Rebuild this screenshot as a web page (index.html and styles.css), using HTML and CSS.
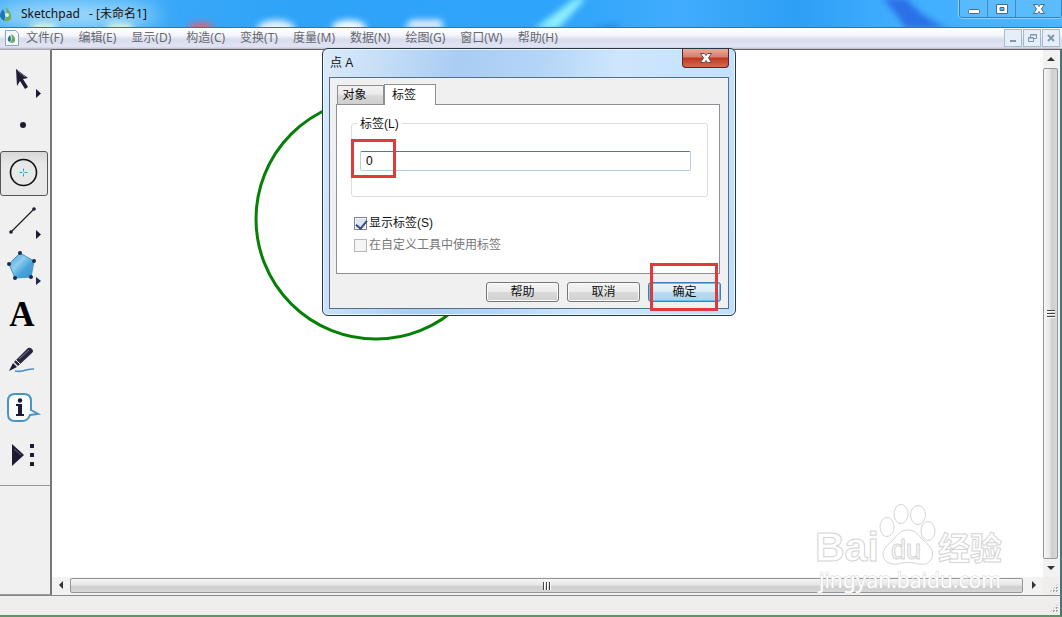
FILE: index.html
```html
<!DOCTYPE html>
<html lang="zh-CN">
<head>
    <meta charset="UTF-8">
    <meta name="viewport" content="width=device-width, initial-scale=1.0">
    <title>Sketchpad - [未命名1]</title>
    <link rel="stylesheet" href="styles.css">
</head>
<body>
    <header class="titlebar">
        <svg class="aero" viewBox="0 0 1062 27" preserveAspectRatio="none" aria-hidden="true">
            <defs>
                <filter id="soft" x="-50%" y="-50%" width="200%" height="200%"><feGaussianBlur stdDeviation="3"/></filter>
                <filter id="glow" x="-50%" y="-100%" width="200%" height="300%"><feGaussianBlur stdDeviation="10"/></filter>
            </defs>
            <ellipse cx="75" cy="15" rx="85" ry="13" fill="#a4dcfb" filter="url(#glow)"/>
            <g filter="url(#soft)">
                <ellipse cx="44" cy="28" rx="14" ry="5" fill="#e2f8d8"/>
                <ellipse cx="120" cy="28" rx="14" ry="5" fill="#e2f8d8"/>
                <ellipse cx="201" cy="28" rx="13" ry="6" fill="#c96a80"/>
                <ellipse cx="276" cy="29" rx="19" ry="9" fill="#e4f3fd"/>
                <ellipse cx="349" cy="28" rx="17" ry="8" fill="#f4fbff"/>
                <path d="M404 29l7-9h30l3 9z" fill="#eaf0ff"/>
                <path d="M534 29L576-2h10L558 29z" fill="#8ff0ff"/>
                <path d="M590 29q12-5 30-4l-4 5z" fill="#1b83e8"/>
                <path d="M882-2h24q18 22 44 31h-44q-9-15-24-31z" fill="#2a6fe6"/>
            </g>
        </svg>
        <svg class="app-icon" viewBox="0 0 14 16" aria-hidden="true">
            <path d="M5 1q7 5 6 12-3 3-7 2 5-6 1-14z" fill="#6fae4c"/>
            <path d="M3 3q4 6 1 12-5-3-4-7 1-3 3-5z" fill="#2278b5"/>
            <circle cx="7" cy="9" r="2" fill="#d8f0ff"/>
        </svg>
        <h1>Sketchpad&nbsp;&nbsp; - [未命名1]</h1>
        <div class="window-buttons">
            <button type="button" aria-label="最小化"><svg viewBox="0 0 14 12"><rect x="1.500" y="6.500" width="11" height="4" rx="1" fill="#fff" stroke="#47698a"/></svg></button>
            <button type="button" aria-label="最大化"><svg viewBox="0 0 14 12"><path d="M1.500 1.500h11v9h-11zM5 4.500v3h4v-3z" fill="#fff" fill-rule="evenodd" stroke="#47698a"/></svg></button>
            <button type="button" class="wide" aria-label="关闭"><svg viewBox="0 0 14 12"><path d="M1.500 1.500h4L7 3.500l1.500-2h4L9.500 6l3 4.500h-4L7 8.500l-1.500 2h-4l3-4.500z" fill="#fff" stroke="#47698a"/></svg></button>
        </div>
    </header>

    <nav class="menubar">
        <svg class="doc-icon" viewBox="0 0 14 16" aria-hidden="true">
            <path d="M.5.5h10l3 3v12H.5z" fill="#f5f9fc" stroke="#8aa5b7"/>
            <path d="M6 4q5 3 4 7-1 2-5 2 3-3 1-9z" fill="#69a957"/>
            <path d="M5 5q2 4 0 7-3-1-2-4 1-2 2-3z" fill="#2873a8"/>
        </svg>
        <a href="#">文件(F)</a>
        <a href="#">编辑(E)</a>
        <a href="#">显示(D)</a>
        <a href="#">构造(C)</a>
        <a href="#">变换(T)</a>
        <a href="#">度量(M)</a>
        <a href="#">数据(N)</a>
        <a href="#">绘图(G)</a>
        <a href="#">窗口(W)</a>
        <a href="#">帮助(H)</a>
        <div class="doc-buttons">
            <button type="button" aria-label="最小化文档"><svg viewBox="0 0 10 10"><path d="M2 8h6" stroke="#7d97ad" stroke-width="2"/></svg></button>
            <button type="button" aria-label="还原文档"><svg viewBox="0 0 10 10"><path d="M3.500 4V1.500h6v4H7M3.500 2h6M1.500 4.500h5v4h-5zM1.500 5h5" fill="none" stroke="#7d97ad"/></svg></button>
            <button type="button" aria-label="关闭文档"><svg viewBox="0 0 10 10"><path d="M2 2l6 6M8 2L2 8" stroke="#7d97ad" stroke-width="2"/></svg></button>
        </div>
    </nav>

    <main class="workspace">
        <aside class="toolbar">
            <div class="tools">
                <button type="button" aria-label="移动箭头工具">
                    <svg viewBox="0 0 46 44"><path d="M15 11l12 9-5 1 5 8-3 2-5-8-3 5z" fill="#1e1b35"/><path d="M17 13l7 6" stroke="#77758d"/><path d="M35 31l5 4.500-5 4.500z" fill="#1e1b35"/></svg>
                </button>
                <button type="button" aria-label="点工具">
                    <svg viewBox="0 0 46 44"><circle cx="22" cy="20" r="3" fill="#1e1b35"/></svg>
                </button>
                <button type="button" class="active" aria-label="圆工具">
                    <svg viewBox="0 0 46 44"><circle cx="22.500" cy="20.500" r="13" fill="none" stroke="#111" stroke-width="1.600"/><path d="M22.500 16.500v3M22.500 21.500v3M18.500 20.500h3M23.500 20.500h3" stroke="#3a9bd0"/></svg>
                </button>
                <button type="button" aria-label="直尺工具">
                    <svg viewBox="0 0 46 44"><path d="M10 33L33 10" stroke="#222" stroke-width="1.300"/><circle cx="10" cy="33" r="1.800" fill="#1e1b35"/><circle cx="33" cy="10" r="1.800" fill="#1e1b35"/><path d="M35 31l5 4.500-5 4.500z" fill="#1e1b35"/></svg>
                </button>
                <button type="button" aria-label="多边形工具">
                    <svg viewBox="0 0 46 44">
                        <defs><linearGradient id="poly" x2="1" y2="1"><stop stop-color="#4499d0"/><stop offset=".4" stop-color="#8ecdf0"/><stop offset=".65" stop-color="#4aa2da"/><stop offset="1" stop-color="#3c94ce"/></linearGradient></defs>
                        <path d="M19 7l14 8-3 16-16 1-6-14z" fill="url(#poly)" stroke="#4396ca"/>
                        <g fill="#1e2a45"><circle cx="19" cy="7" r="2"/><circle cx="33" cy="15" r="2"/><circle cx="30" cy="31" r="2"/><circle cx="14" cy="32" r="2"/><circle cx="8" cy="18" r="2"/><path d="M35 31l5 4-5 4z"/></g>
                    </svg>
                </button>
                <button type="button" class="text-tool" aria-label="文本工具">A</button>
                <button type="button" aria-label="标记工具">
                    <svg viewBox="0 0 46 44"><path d="M14 31q6 1 11-1 4-1 8-1" fill="none" stroke="#4295cb" stroke-width="1.600"/><path d="M8 31l4-8 4 4z" fill="#1e1b35"/><path d="M13 22L27 8q2-1 4 1t0 4L17 26z" fill="#282640"/><path d="M18 19L28 10" stroke="#85849a"/><path d="M15 20l4 4" stroke="#eee"/></svg>
                </button>
                <button type="button" aria-label="信息工具">
                    <svg viewBox="0 0 46 44"><path d="M14 7h9q7 0 7 7v9l7 4-8 1q-2 6-8 6h-7q-7 0-7-7V14q0-7 7-7z" fill="#fafcfd" stroke="#4a94c2" stroke-width="2"/><circle cx="19" cy="13.500" r="2.200" fill="#1e1b35"/><path d="M15 17h6v10h2v2h-8v-2h2v-8h-2z" fill="#1e1b35"/></svg>
                </button>
                <button type="button" aria-label="自定义工具">
                    <svg viewBox="0 0 46 44"><path d="M11 10l12 11-12 11z" fill="#1e1b35"/><path d="M13 15l7 6" stroke="#626077"/><path d="M29 10h4v4h-4zM29 19h4v4h-4zM29 28h4v4h-4z" fill="#1e1b35"/></svg>
                </button>
            </div>
        </aside>

        <div class="sketch">
            <svg class="drawing" aria-label="圆"><circle cx="324" cy="169" r="120"/></svg>
            <div class="scroll scroll-y">
                <svg viewBox="0 0 16 18"><path d="M4 11h8L8 7z"/></svg>
                <div class="thumb"></div>
                <svg viewBox="0 0 16 18"><path d="M4 7h8l-4 4z"/></svg>
            </div>
            <div class="scroll scroll-x">
                <svg viewBox="0 0 18 16"><path d="M11 4v8L7 8z"/></svg>
                <div class="thumb"></div>
                <svg viewBox="0 0 18 16"><path d="M7 4v8l4-4z"/></svg>
            </div>
            <div class="corner"><i class="grip"></i></div>
        </div>

        <form class="dialog" role="dialog" aria-labelledby="dialogTitle">
            <div class="dialog-title">
                <h2 id="dialogTitle">点 A</h2>
                <button type="button" class="dialog-close" aria-label="关闭"><svg viewBox="0 0 14 12"><path d="M1.500 1.500h4L7 3.500l1.500-2h4L9.500 6l3 4.500h-4L7 8.500l-1.500 2h-4l3-4.500z" fill="#fff" stroke="#6d4a4c"/></svg></button>
            </div>
            <div class="dialog-body">
                <div class="tabs">
                    <button type="button">对象</button>
                    <button type="button" class="selected">标签</button>
                </div>
                <div class="panel">
                    <div class="group">
                        <label for="labelText">标签(L)</label>
                        <input type="text" id="labelText" value="0">
                        <span class="mark mark-input"></span>
                    </div>
                    <div class="check">
                        <input type="checkbox" id="showLabel" checked>
                        <label for="showLabel">显示标签(S)</label>
                    </div>
                    <div class="check">
                        <input type="checkbox" id="useLabel" disabled>
                        <label for="useLabel">在自定义工具中使用标签</label>
                    </div>
                </div>
                <div class="actions">
                    <button type="button">帮助</button>
                    <button type="button">取消</button>
                    <button type="button" class="default">确定<span class="mark mark-ok"></span></button>
                </div>
            </div>
        </form>
    </main>

    <footer class="statusbar"><i class="grip"></i></footer>

    <!-- 水印 -->
    <svg class="watermark" viewBox="0 0 196 92" aria-label="Baidu 经验">
        <g fill="#fff" stroke="#d4d4d4">
            <text class="wm-bai" x="1" y="58">Bai</text>
            <path d="M94 27c8 0 10 5 15 10 8 7 11 11 9 17-2 7-8 8-14 7-7-2-13-2-20 0-8 1-14-2-15-9 0-7 5-10 10-15 5-6 8-10 15-10z"/>
            <ellipse cx="73" cy="24" rx="7" ry="9.500"/>
            <ellipse cx="87" cy="11" rx="7" ry="9.500"/>
            <ellipse cx="104" cy="12" rx="7.500" ry="9.500"/>
            <ellipse cx="114" cy="28" rx="7" ry="9.500"/>
            <text class="wm-du" x="77" y="56">du</text>
            <text class="wm-cn" x="124" y="57">经验</text>
        </g>
        <text class="wm-url" x="5" y="85">jingyan.baidu.com</text>
    </svg>
</body>
</html>
```
FILE: styles.css
```css
* {
    box-sizing: border-box;
}

body {
    margin: 0;
    height: 100vh;
    display: flex;
    flex-direction: column;
    position: relative;
    overflow: hidden;
    background: #f0eeed;
    font-family: "Noto Sans", "Noto Sans CJK SC", sans-serif;
    font-size: 12px;
    line-height: 16px;
    color: #111;
}

button {
    padding: 0;
    font: inherit;
    color: inherit;
}

h1, h2 {
    margin: 0;
    font-size: 12px;
    font-weight: normal;
}

/* Barra de título */
.titlebar {
    position: relative;
    display: flex;
    align-items: center;
    flex: none;
    height: 27px;
    background: linear-gradient(90deg, #45aef8 0, #2fa3f8 28%, #2ea4fb 52%, #41acfb 64%, #2d9ff5 75%, #40adff 84%, #4ab6ff 100%);
    overflow: hidden;
}

.aero {
    position: absolute;
    inset: 0;
    width: 100%;
    height: 100%;
}

.app-icon {
    position: relative;
    width: 14px;
    height: 16px;
    margin-right: 7px;
}

.titlebar h1 {
    position: relative;
}

.window-buttons {
    position: relative;
    align-self: flex-start;
    display: flex;
    height: 18px;
    margin-left: auto;
    border: 1px solid #3a7fb8;
    border-top: 0;
    border-radius: 0 0 4px 4px;
    box-shadow: 0 0 1px 1px #90d3fb;
}

.window-buttons button {
    display: grid;
    place-items: center;
    width: 28px;
    border: 0;
    border-right: 1px solid #4489bd;
    background: rgba(120, 200, 250, 0.4);
}

.window-buttons .wide {
    width: 45px;
    border-right: 0;
}

.window-buttons svg,
.dialog-close svg {
    width: 14px;
    height: 12px;
}

/* Menu */
.menubar {
    display: flex;
    align-items: center;
    gap: 15px;
    flex: none;
    height: 22px;
    padding: 0 2px 2px 5px;
    border-top: 1px solid #3b7393;
    background: linear-gradient(#fff 0, #f5f6fb 35%, #d8dced 55%, #e0e4f2 90%, #b5b9c6 100%);
}

.menubar a {
    color: #66686f;
    text-decoration: none;
    white-space: nowrap;
}

.doc-icon {
    width: 14px;
    height: 16px;
    margin-right: -8px;
}

.doc-buttons {
    display: flex;
    gap: 1px;
    margin-left: auto;
}

.doc-buttons button {
    display: grid;
    place-items: center;
    width: 18px;
    height: 18px;
    border: 1px solid #a3bdd0;
    background: #e6eff9;
}

.doc-buttons svg {
    width: 10px;
    height: 10px;
}

/* Área de trabalho */
.workspace {
    position: relative;
    display: flex;
    flex: 1;
    min-height: 0;
    border-right: 2px solid #49737a;
}

.toolbar {
    width: 52px;
    border-top: 1px solid #aaa;
    border-right: 2px solid #777;
    border-bottom: 1px solid #999;
    background: #f0f0f0;
}

.tools {
    display: grid;
    gap: 2px;
    padding: 7px 3px 7px 0;
    border-bottom: 1px solid #999;
}

.tools button {
    height: 45px;
    border: 1px solid transparent;
    border-radius: 3px;
    background: none;
}

.tools .active {
    border-color: #555;
    background: linear-gradient(#d8d8d8, #e8e8e8 30%);
}

.tools svg {
    display: block;
    width: 46px;
    height: 44px;
}

.tools .text-tool {
    padding-right: 4px;
    font-family: "Liberation Serif", serif;
    font-size: 35px;
    font-weight: bold;
    line-height: 36px;
    color: #000;
}

.sketch {
    flex: 1;
    display: grid;
    grid-template-columns: 1fr 17px;
    grid-template-rows: 1fr 18px;
    border-top: 1px solid #666;
    background: #fff;
}

.drawing {
    width: 100%;
    height: 100%;
}

.drawing circle {
    fill: none;
    stroke: #078007;
    stroke-width: 3px;
}

.scroll {
    display: flex;
    background: #f2f2f2;
}

.scroll svg {
    flex: none;
    fill: #333;
}

.scroll-y {
    flex-direction: column;
}

.scroll-y svg {
    width: 16px;
    height: 18px;
}

.scroll-x svg {
    width: 18px;
    height: 16px;
}

.thumb {
    flex: 1;
    display: grid;
    place-items: center;
    border: 1px solid #969696;
    border-radius: 2px;
}

.scroll-y .thumb {
    margin-right: 2px;
    background: linear-gradient(90deg, #f6f6f6, #e6e6e6 45%, #cecece 60%, #d8d8d8);
}

.scroll-x .thumb {
    margin: 1px 2px 2px 0;
    background: linear-gradient(#f6f6f6, #e6e6e6 45%, #cecece 60%, #d8d8d8);
}

.thumb::before {
    content: "";
    width: 8px;
    height: 8px;
    background: repeating-linear-gradient(#444 0 1px, #fff 1px 2px, transparent 2px 3px);
}

.scroll-x .thumb::before {
    background: repeating-linear-gradient(90deg, #444 0 1px, #fff 1px 2px, transparent 2px 3px);
}

.corner,
.statusbar {
    display: flex;
    justify-content: flex-end;
    align-items: flex-end;
    background: #f0eeed;
}

.grip {
    width: 9px;
    height: 9px;
    margin: 2px;
    background: conic-gradient(#a5a5a5 90deg, transparent 0) 0 0 / 3px 3px;
    clip-path: polygon(100% 0, 100% 100%, 0 100%);
}

.statusbar {
    flex: none;
    height: 22px;
    border-top: 1px solid #888;
    border-right: 2px solid #49737a;
    border-bottom: 2px solid #5f9564;
}

/* Caixa de diálogo */
.dialog {
    position: absolute;
    top: -1px;
    left: 322px;
    width: 414px;
    padding: 0 6px 6px;
    border: 1px solid #26384a;
    border-radius: 6px;
    background: linear-gradient(100deg, #dcebfa 0, #a9cdf3 30%, #b3d5f7 48%, #cee6fd 65%, #bfdffc 100%);
    box-shadow: inset 0 0 0 1px #eaf6ff;
    font-family: "Liberation Sans", "Noto Sans CJK SC", sans-serif;
}

.dialog-title {
    display: flex;
    justify-content: space-between;
    height: 28px;
}

.dialog-title h2 {
    padding: 6px 1px;
}

.dialog-close {
    display: grid;
    place-items: center;
    width: 47px;
    height: 19px;
    border: 1px solid #58252a;
    border-top: 0;
    border-radius: 0 0 4px 4px;
    background: linear-gradient(#e9aa9b 0, #d97c68 45%, #bd3820 50%, #d66a4d 100%);
}

.dialog-body {
    padding: 6px 8px 6px 6px;
    border: 1px solid #536f8b;
    background: #f0f0f0;
}

.tabs {
    display: flex;
    align-items: flex-end;
    padding-left: 1px;
}

.tabs button {
    width: 47px;
    height: 19px;
    padding-right: 12px;
    border: 1px solid #8c8f94;
    border-bottom: 0;
    background: linear-gradient(#f3f3f3 0, #ebebeb 45%, #d8d8d8 55%, #cfcfcf 100%);
}

.tabs .selected {
    position: relative;
    width: 52px;
    height: 21px;
    margin-bottom: -1px;
    background: #fff;
}

.panel {
    height: 170px;
    padding: 18px 11px 0 14px;
    border: 1px solid #8c8f94;
    background: #fff;
}

.group {
    position: relative;
    height: 74px;
    margin-bottom: 18px;
    padding: 0 16px 0 8px;
    border: 1px solid #d8dfe0;
    border-radius: 3px;
}

.group label {
    display: block;
    width: max-content;
    margin: -8px 0 19px -3px;
    padding: 0 3px;
    background: #fff;
}

.group input {
    display: block;
    width: 100%;
    height: 20px;
    padding: 0 5px;
    border: 1px solid #b5cfe0;
    border-top-color: #4a7d9e;
    border-radius: 2px;
    background: #fff;
    font: inherit;
}

.mark {
    position: absolute;
    border: 3px solid #e2393c;
    pointer-events: none;
}

.mark-input {
    top: 15px;
    left: -1px;
    width: 45px;
    height: 39px;
}

.mark-ok {
    top: -20px;
    left: 1px;
    width: 68px;
    height: 48px;
}

.check {
    display: flex;
    align-items: center;
    gap: 2px;
    height: 16px;
    margin: 0 0 6px 3px;
}

.check input {
    appearance: none;
    flex: none;
    width: 13px;
    height: 13px;
    margin: 0;
    border: 1px solid #7e8792;
    background: #dde5ee;
    box-shadow: inset 0 0 0 1px #f4f4f4;
}

.check input:checked::before {
    content: "";
    display: block;
    width: 5px;
    height: 9px;
    margin-left: 3px;
    border: solid #3a4a84;
    border-width: 0 2px 2px 0;
    transform: rotate(40deg);
}

.check input:disabled {
    border-color: #b8b8b8;
    background: #f6f6f6;
}

.check input:disabled + label {
    color: #777;
}

.actions {
    display: flex;
    justify-content: flex-end;
    gap: 8px;
    margin-top: 8px;
    margin-right: -1px;
}

.actions button {
    position: relative;
    width: 73px;
    height: 20px;
    border: 1px solid #777;
    border-radius: 3px;
    background: linear-gradient(#f4f4f4 0, #ebebeb 48%, #dadada 52%, #d0d0d0 100%);
    box-shadow: inset 0 0 0 1px #fafafa;
    line-height: 16px;
}

.actions .default {
    border-color: #3c7fb1;
    background: linear-gradient(#eaf4fa 0, #d9ecf7 48%, #b9dcf0 52%, #a8d4ec 100%);
    box-shadow: inset 0 0 0 1px #5cc7ee;
}

/* Marca d'água */
.watermark {
    position: absolute;
    right: 52px;
    bottom: 22px;
    width: 196px;
    height: 92px;
    pointer-events: none;
}

.wm-bai,
.wm-du {
    font-family: "Liberation Sans", sans-serif;
    font-weight: bold;
    font-size: 41px;
}

.wm-du {
    font-size: 27px;
    font-weight: normal;
}

.wm-cn {
    font-family: "Noto Sans CJK SC", sans-serif;
    font-weight: bold;
    font-size: 32px;
}

.wm-url {
    font-family: "Noto Sans", sans-serif;
    font-size: 21px;
    fill: #fff;
    stroke: #d4d4d4;
    stroke-width: 1px;
    paint-order: stroke;
}
```
